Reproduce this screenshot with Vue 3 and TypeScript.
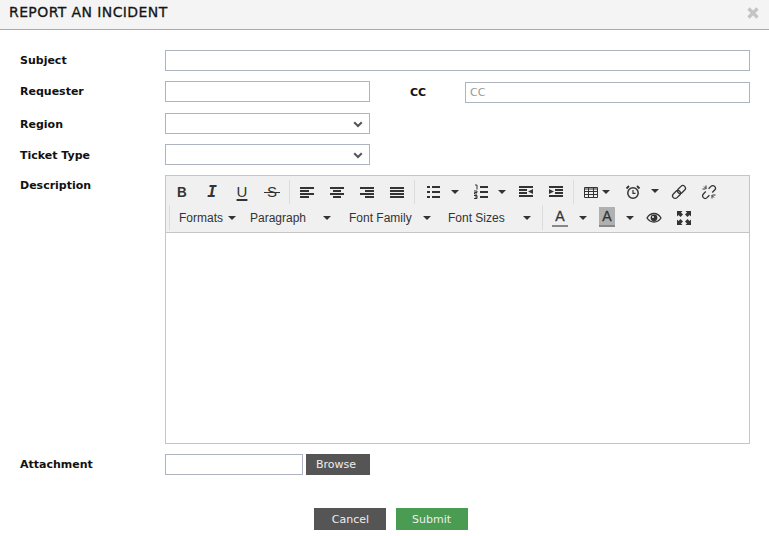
<script setup lang="ts">
interface Menu {
  label: string
  width: number
  text: number
}

const menus: Menu[] = [
  { label: 'Formats', width: 71, text: 49 },
  { label: 'Paragraph', width: 99, text: 73 },
  { label: 'Font Family', width: 99, text: 74 },
  { label: 'Font Sizes', width: 101, text: 75 },
]

const selects = ['Region', 'Ticket Type']
</script>

<template>
  <div class="modal">
    <header class="head">
      <h1>REPORT AN INCIDENT</h1>
      <svg class="close" width="12" height="12" viewBox="0 0 12 12"><path d="M1.500 1.500l9 9M10.500 1.500l-9 9" stroke="#c4c4c4" stroke-width="3.200" /></svg>
    </header>

    <form class="form" @submit.prevent>
      <div class="row">
        <label>Subject</label>
        <input class="field grow" type="text" />
      </div>
      <div class="row req">
        <label>Requester</label>
        <input class="field half" type="text" />
        <label class="cc-label">CC</label>
        <input class="field grow cc" type="text" placeholder="CC" />
      </div>
      <div v-for="name in selects" :key="name" class="row">
        <label class="sel-label">{{ name }}</label>
        <div class="select-wrap">
          <select class="field half"></select>
          <svg class="chevron" width="10" height="7" viewBox="0 0 10 7"><path d="M1.200 1.200L5 5l3.800-3.800" fill="none" stroke="#555" stroke-width="2" /></svg>
        </div>
      </div>

      <div class="row">
        <label>Description</label>
        <div class="editor">
          <div class="toolbar">
            <div class="tb-row first">
              <div class="group">
                <span class="btn glyph g-b">B</span>
                <span class="btn glyph g-i">I</span>
                <span class="btn glyph g-u">U</span>
                <span class="btn glyph g-s">&#8201;S&#8201;</span>
              </div>
              <div class="group sep">
                <span class="btn"><svg viewBox="0 0 16 16" class="ic"><path d="M1 3h14v2H1zM1 6h9v2H1zM1 9h14v2H1zM1 12h9v2H1z" /></svg></span>
                <span class="btn"><svg viewBox="0 0 16 16" class="ic"><path d="M1 3h14v2H1zM4 6h8v2H4zM1 9h14v2H1zM4 12h8v2H4z" /></svg></span>
                <span class="btn"><svg viewBox="0 0 16 16" class="ic"><path d="M1 3h14v2H1zM6 6h9v2H6zM1 9h14v2H1zM6 12h9v2H6z" /></svg></span>
                <span class="btn"><svg viewBox="0 0 16 16" class="ic"><path d="M1 3h14v2H1zM1 6h14v2H1zM1 9h14v2H1zM1 12h14v2H1z" /></svg></span>
              </div>
              <div class="group sep">
                <span class="btn split"><svg viewBox="0 0 16 16" class="ic"><path d="M1 2h3v2H1zM6 2h8v2H6zM1 7h3v2H1zM6 7h8v2H6zM1 12h3v2H1zM6 12h8v2H6z" /></svg></span>
                <span class="caret-btn"><i class="caret"></i></span>
                <span class="btn split"><svg viewBox="0 0 16 16" class="ic"><path d="M7 2h8v2H7zM7 7h8v2H7zM7 12h8v2H7z" /><path d="M2 1h2v4.500M1 7h3v1.500H1.500V10H4M1 11.500h3v1.500H2M4 13v1.500H1" fill="none" stroke="#333" stroke-width="1" /></svg></span>
                <span class="caret-btn"><i class="caret"></i></span>
                <span class="btn"><svg viewBox="0 0 16 16" class="ic"><path d="M1 2h14v2H1zM1 5h8v2H1zM1 8h8v2H1zM1 11h14v2H1zM10 7.500L15 5v5z" /></svg></span>
                <span class="btn"><svg viewBox="0 0 16 16" class="ic"><path d="M1 2h14v2H1zM7 5h8v2H7zM7 8h8v2H7zM1 11h14v2H1zM6 7.500L1 5v5z" /></svg></span>
              </div>
              <div class="group sep">
                <span class="btn table"><svg viewBox="0 0 16 16" class="ic"><path d="M1.500 3.500h13v10h-13zM1.500 5h13M1.500 7.500h13M1.500 10.500h13M5.500 3.500v10M10.500 3.500v10" fill="none" stroke="#333" stroke-width="1" /></svg><i class="caret"></i></span>
                <span class="btn"><svg viewBox="0 0 16 16" class="ic"><circle cx="8" cy="9" r="5.200" fill="none" stroke="#333" stroke-width="1.500" /><path d="M8 6v3.300h2.500" fill="none" stroke="#333" stroke-width="1.200" /><path d="M1.500 4.500L4 2M14.500 4.500L12 2" stroke="#333" stroke-width="1.800" /></svg></span>
                <span class="caret-btn narrow"><i class="caret"></i></span>
                <span class="btn"><svg viewBox="0 0 16 16" class="ic"><g transform="rotate(-45 8 8)" fill="none" stroke="#333" stroke-width="1.300"><rect x="0" y="5.400" width="9" height="5.200" rx="2.600" /><rect x="7" y="5.400" width="9" height="5.200" rx="2.600" /></g></svg></span>
                <span class="btn"><svg viewBox="0 0 16 16" class="ic"><g transform="rotate(-45 8 8)" fill="none" stroke="#333" stroke-width="1.300"><path d="M6 5.400H2.600a2.600 2.600 0 0 0 0 5.200H6M10 5.400h3.400a2.600 2.600 0 0 1 0 5.200H10" /></g><path d="M1.500 5h3M5 1.500v3M14.500 11h-3M11 14.500v-3M3 2.500l2.500 2.500M13 13.500L10.500 11" stroke="#333" stroke-width="1" /></svg></span>
              </div>
            </div>

            <div class="tb-row second">
              <div class="group">
                <span v-for="m in menus" :key="m.label" class="menu" :style="{ width: m.width + 'px' }">
                  <span class="menu-text" :style="{ width: m.text + 'px' }">{{ m.label }}</span>
                  <i class="caret"></i>
                </span>
              </div>
              <div class="group sep">
                <span class="btn color"><span class="a-box"><b>A</b></span><i class="bar"></i></span>
                <span class="caret-btn"><i class="caret"></i></span>
                <span class="btn color"><span class="a-box shaded"><b>A</b></span><i class="bar"></i></span>
                <span class="caret-btn"><i class="caret"></i></span>
                <span class="btn"><svg viewBox="0 0 16 16" class="ic"><path d="M1 8c2-3.500 4.500-4.500 7-4.500s5 1 7 4.500c-2 3-4.500 4-7 4s-5-1-7-4z" fill="none" stroke="#333" stroke-width="1.300" /><circle cx="8" cy="7.800" r="3.400" /><circle cx="7" cy="7" r="1" fill="#f0f0f0" /></svg></span>
                <span class="btn"><svg viewBox="0 0 16 16" class="ic"><path d="M1 1h5.500L5 2.500l2 2L4.500 7l-2-2L1 6.500zM15 1H9.500L11 2.500l-2 2L11.500 7l2-2L15 6.500zM1 15h5.500L5 13.500l2-2L4.500 9l-2 2L1 9.500zM15 15H9.500l1.500-1.500-2-2L11.500 9l2 2L15 9.500z" /></svg></span>
              </div>
            </div>
          </div>
        </div>
      </div>

      <div class="row attach">
        <label>Attachment</label>
        <input class="field file" type="text" />
        <button class="action browse" type="button">Browse</button>
      </div>

      <div class="actions">
        <button class="action wide cancel" type="button">Cancel</button>
        <button class="action wide submit" type="submit">Submit</button>
      </div>
    </form>
  </div>
</template>

<style>
body {
  background: #fff;
}
</style>

<style scoped>
.modal {
  width: 769px;
  height: 536px;
  overflow: hidden;
  color: #111;
  font-family: "DejaVu Sans", sans-serif;
}

.head {
  display: flex;
  justify-content: space-between;
  box-sizing: border-box;
  height: 30px;
  background: #f4f4f4;
  border-bottom: 1px solid #aaa;
}

h1 {
  margin: 4px 0 0 9px;
  font-size: 14px;
  font-weight: 400;
  line-height: 17px;
  letter-spacing: 0.4px;
  -webkit-text-stroke: 0.3px #222;
}

.close {
  margin: 7px 10px 0 0;
}

.form {
  padding: 20px 19px 0 20px;
}

.row {
  display: flex;
  margin-bottom: 10px;
}

.req {
  height: 21px;
  margin-bottom: 11px;
}

label {
  flex: none;
  width: 145px;
  font-size: 11px;
  font-weight: 700;
  line-height: 21px;
}

.sel-label {
  line-height: 23px;
  height: 21px;
}

.field {
  display: block;
  box-sizing: border-box;
  height: 21px;
  margin: 0;
  padding: 0 4px;
  border: 1px solid #adb3bf;
  border-radius: 0;
  background: #fff;
  font-family: inherit;
  font-size: 11px;
  outline: none;
}

.grow {
  flex: 1;
  min-width: 0;
}

.half {
  width: 205px;
}

.cc-label {
  width: 55px;
  margin-left: 40px;
  line-height: 23px;
}

.cc {
  margin-top: 1px;
}

.cc::placeholder {
  color: #999;
}

.select-wrap {
  position: relative;
}

select {
  appearance: none;
}

.chevron {
  position: absolute;
  top: 8px;
  right: 7px;
}

.editor {
  flex: 1;
  box-sizing: border-box;
  height: 269px;
  border: 1px solid #c5c5c5;
}

.toolbar {
  box-sizing: border-box;
  height: 57px;
  padding-top: 4px;
  background: #f0f0f0;
  border-bottom: 1px solid #c5c5c5;
}

.tb-row {
  display: flex;
}

.first {
  height: 24px;
  padding-left: 1px;
}

.second {
  height: 25px;
  margin-top: 1px;
  margin-left: 3px;
  border-left: 1px solid #ddd;
}

.group {
  display: flex;
  height: 100%;
}

.sep {
  margin-left: 2px;
  padding-left: 2px;
  border-left: 1px solid #ddd;
}

.btn {
  display: flex;
  flex: none;
  align-items: center;
  justify-content: center;
  width: 30px;
}

.ic {
  display: block;
  flex: none;
  width: 16px;
  height: 16px;
  fill: #333;
}

.split {
  justify-content: flex-start;
  padding-left: 9px;
  box-sizing: border-box;
}

.table {
  justify-content: flex-start;
  box-sizing: border-box;
  width: 42px;
  padding-left: 7px;
}

.table .caret {
  margin-left: 3px;
}

.caret-btn {
  display: flex;
  flex: none;
  align-items: center;
  box-sizing: border-box;
  width: 17px;
  padding-left: 4px;
}

.narrow {
  width: 16px;
  padding-left: 3px;
  padding-bottom: 2px;
}

.caret {
  display: block;
  flex: none;
  width: 0;
  height: 0;
  border-top: 4px solid #333;
  border-right: 4px solid transparent;
  border-left: 4px solid transparent;
}

.glyph {
  color: #333;
  font-family: "Liberation Sans", sans-serif;
  font-size: 14px;
  line-height: 16px;
}

.g-b {
  font-size: 15px;
  font-weight: 700;
  transform: scaleX(0.9);
}

.g-i {
  font-family: "DejaVu Sans Mono", monospace;
  font-style: oblique;
  font-size: 16px;
  font-weight: 700;
}

.g-u {
  font-size: 15px;
  text-decoration: underline;
  text-decoration-thickness: 1.500px;
  text-underline-offset: 2px;
}

.g-s {
  font-size: 15px;
  text-decoration: line-through;
  white-space: pre;
}

.menu {
  display: flex;
  flex: none;
  align-items: center;
  box-sizing: border-box;
  padding-left: 9px;
  color: #333;
  font-family: "Liberation Sans", sans-serif;
  font-size: 12px;
}

.menu-text {
  flex: none;
  white-space: nowrap;
}

.color {
  position: relative;
  flex-direction: column;
  justify-content: flex-start;
  padding-top: 2px;
  box-sizing: border-box;
}

.a-box {
  display: block;
  width: 16px;
  height: 18px;
  color: #333;
  font-family: "Liberation Sans", sans-serif;
  font-size: 14px;
  line-height: 18px;
  text-align: center;
}

.a-box b {
  font-weight: 400;
  -webkit-text-stroke: 0.3px #333;
}

.shaded {
  background: #b0b0b0;
}

.bar {
  display: block;
  width: 16px;
  height: 2px;
  margin-top: 0;
  background: #888;
}

.file {
  width: 138px;
}

.action {
  height: 21px;
  padding: 0;
  border: 0;
  background: #555;
  color: #eee;
  font-family: inherit;
  font-size: 11px;
}

.browse {
  width: 64px;
  margin-left: 3px;
  padding-right: 4px;
}

.attach {
  margin-bottom: 33px;
}

.actions {
  display: flex;
  justify-content: center;
  gap: 10px;
  padding-left: 11px;
}

.wide {
  width: 72px;
  height: 22px;
}

.cancel {
  padding-left: 2px;
}

.submit {
  background: #4a9c53;
}
</style>
